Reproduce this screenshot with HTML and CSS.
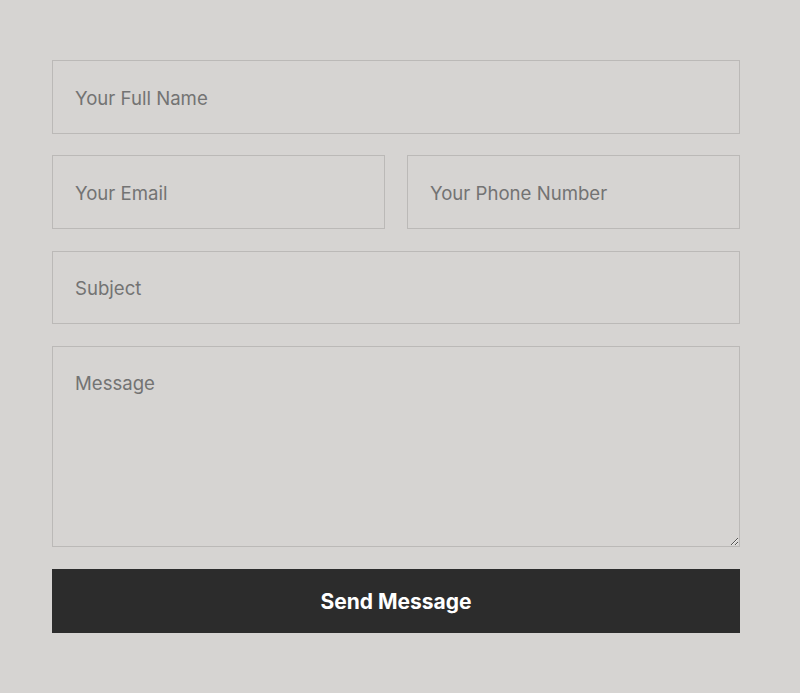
FILE: index.html
```html
<!DOCTYPE html>
<html>
<head>
<meta charset="utf-8">
<link rel="stylesheet" href="styles.css">
</head>
<body>
<form class="contact-form">
  <input class="field" type="text" placeholder="Your Full Name">
  <div class="row">
    <input class="field" type="email" placeholder="Your Email">
    <input class="field" type="tel" placeholder="Your Phone Number">
  </div>
  <input class="field" type="text" placeholder="Subject">
  <textarea class="field message" placeholder="Message"></textarea>
  <button class="send" type="button">Send Message</button>
</form>
</body>
</html>
```
FILE: styles.css
```css
html, body {
  margin: 0;
  padding: 0;
  background: #d6d4d2;
  height: 100%;
}
body {
  font-family: Inter, "Noto Sans", sans-serif;
}
.contact-form {
  width: 688px;
  margin-left: 52px;
  padding-top: 60px;
  display: flex;
  flex-direction: column;
  gap: 21.75px;
}
.row {
  display: grid;
  grid-template-columns: 1fr 1fr;
  gap: 22px;
}
.field {
  box-sizing: border-box;
  width: 100%;
  height: 73.5px;
  margin: 0;
  padding: 2px 22px 0;
  border: 1px solid #bbb9b7;
  background: transparent;
  font-family: Inter, "Noto Sans", sans-serif;
  font-size: 18.6px;
  color: #333;
  outline: none;
  border-radius: 0;
}
.field::placeholder {
  color: #737373;
  opacity: 1;
}
.message {
  height: 201.5px;
  padding-top: 25px;
  padding-bottom: 10px;
  resize: vertical;
  line-height: 1.2;
  display: block;
}
.send {
  height: 64px;
  padding-top: 2px;
  border: none;
  border-radius: 0;
  background: #2c2c2c;
  color: #fff;
  font-family: Inter, "Noto Sans", sans-serif;
  font-size: 21px;
  font-weight: 700;
  cursor: pointer;
}
```
